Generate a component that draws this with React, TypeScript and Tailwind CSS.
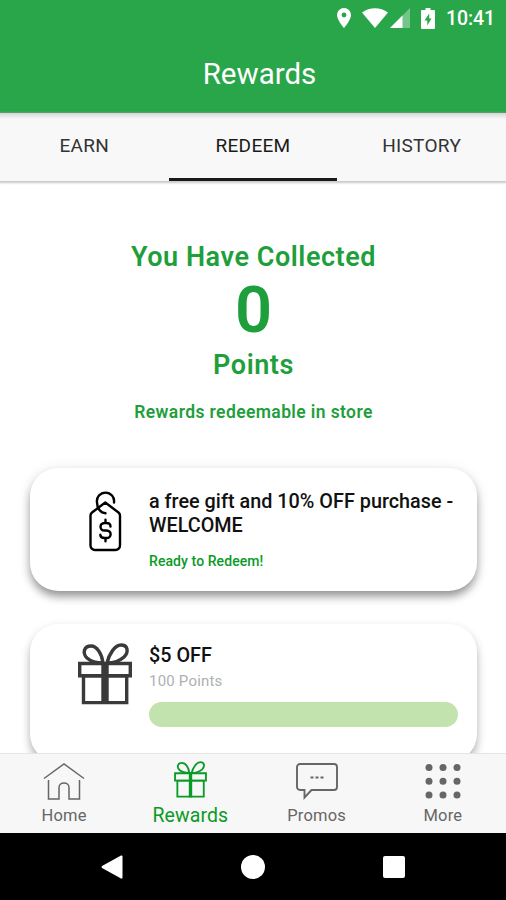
import type { ReactNode } from "react";

type Tab = { label: string; active?: boolean };

const TABS: Tab[] = [
  { label: "EARN" },
  { label: "REDEEM", active: true },
  { label: "HISTORY" },
];

function StatusBar() {
  return (
    <div className="flex h-9 items-center justify-end bg-[#29a649] pr-[11px] text-white">
      <svg width="14" height="20" viewBox="0 0 14 20" className="mr-[11px]">
        <path
          fill="currentColor"
          fillRule="evenodd"
          d="M7 0a7 7 0 0 0-7 7c0 5 7 13 7 13s7-8 7-13a7 7 0 0 0-7-7zm0 4.600a2.400 2.400 0 1 1 0 4.800 2.400 2.400 0 0 1 0-4.800z"
        />
      </svg>
      <svg width="26" height="20" viewBox="0 0 26 20" className="mr-[2px]">
        <path fill="currentColor" d="M0 4.500C7.500-1.200 18.500-1.200 26 4.500L13 20z" />
      </svg>
      <svg width="20" height="20" viewBox="0 0 20 20" className="mr-[11px]">
        <path fill="currentColor" opacity="0.35" d="M20 0v20H0z" />
        <path fill="currentColor" d="M12.500 7.500V20H0z" />
      </svg>
      <svg width="14" height="21" viewBox="0 0 14 21" className="mr-[11px]">
        <path
          fill="currentColor"
          d="M4.500 0h5v2H13a1 1 0 0 1 1 1v17a1 1 0 0 1-1 1H1a1 1 0 0 1-1-1V3a1 1 0 0 1 1-1h3.500z"
        />
        <path fill="#29a649" d="M8.200 5.500L3.500 12.500H6.300V17.500L10.500 10.500H8.200z" />
      </svg>
      <span className="pt-[2px] text-[19.500px] leading-none font-medium tracking-[-0.100px]">10:41</span>
    </div>
  );
}

function GiftIcon({ className, stroke, band }: { className: string; stroke: number; band: number }) {
  return (
    <svg viewBox="0 0 54 62" preserveAspectRatio="none" className={className} fill="none" stroke="currentColor" strokeWidth={stroke}>
      <path d="M1.700 20.500h50.600v12.300H1.700z" />
      <path d="M5.500 32.800h43.200v26.800H5.500z" />
      <path strokeWidth={band} d="M27 19v42" />
      <path d="M25 20C24 11 19 3 13 3C6 3 4 10 9 15C13 18.500 19 20 25 20z" />
      <path d="M29 20C31 11 37 2 43 2C50 2 51 9 46 14C41 18.500 35 20 29 20z" />
    </svg>
  );
}

function PriceTagIcon() {
  return (
    <svg width="34" height="62" viewBox="0 0 34 62" className="text-black" fill="none" stroke="currentColor" strokeWidth="2.400" strokeLinecap="round" strokeLinejoin="round">
      <path d="M17.300 11.500L30.500 21.500Q32 22.700 32 24.500V54.500a4.500 4.500 0 0 1-4.500 4.500H7A4.500 4.500 0 0 1 2.500 54.500V24.500Q2.500 22.700 4 21.500z" />
      <path d="M26 11.500A8.600 8.600 0 1 0 9 11.500C9.200 17.500 12.500 22.200 17.500 22.200" />
      <path d="M22.500 35.500C22.500 33 20.500 32 18.500 32H16.500C11.200 32 11.200 39.500 16.500 39.500H18.500C24 39.500 24 47 18.500 47H16.500C14 47 12.500 46 12.300 43.800M17.500 28.700v3M17.500 47.300v3" />
    </svg>
  );
}

function HomeIcon() {
  return (
    <svg width="42" height="38" viewBox="0 0 42 38" fill="none" stroke="currentColor" strokeWidth="1.500">
      <path d="M1 16.500L21 2L41 16.500" />
      <path d="M5.500 18V37H16V25.500C16 19.500 26 19.500 26 25.500V37H36.500V18" />
    </svg>
  );
}

function ChatIcon() {
  return (
    <svg width="42" height="38" viewBox="0 0 42 38" fill="none" stroke="currentColor" strokeWidth="1.900">
      <path d="M4 2H38a3 3 0 0 1 3 3V25a3 3 0 0 1-3 3H15.500L8.500 35.500V28H4a3 3 0 0 1-3-3V5a3 3 0 0 1 3-3z" />
      <path strokeWidth="2.200" d="M14.500 15.500h3M19.500 15.500h3M24.500 15.500h3" />
    </svg>
  );
}

function MoreIcon() {
  return (
    <svg width="36" height="38" viewBox="0 0 36 38" fill="currentColor">
      {[5.5, 19.2, 33].map((y) =>
        [4, 18, 32].map((x) => <circle key={`${x}-${y}`} cx={x} cy={y} r="3.500" />)
      )}
    </svg>
  );
}

function NavItem({ icon, label, active }: { icon: ReactNode; label: string; active?: boolean }) {
  return (
    <div className={`flex flex-1 flex-col items-center ${active ? "text-[#0a9a26]" : "text-[#666]"}`}>
      <div className="flex h-[47px] items-end pb-px">{icon}</div>
      <span
        className={
          active
            ? "mt-[5px] text-[19.500px] leading-[20px] tracking-[0.100px]"
            : "mt-[6px] text-[16.500px] leading-[18px] tracking-[0.200px]"
        }
      >
        {label}
      </span>
    </div>
  );
}

function Card({ icon, children, className }: { icon: ReactNode; children: ReactNode; className: string }) {
  return (
    <div className={`flex shrink-0 rounded-[28px] bg-white ${className}`}>
      <div className="flex w-[119px] shrink-0 justify-center pl-[30px]">{icon}</div>
      <div className="flex-1">{children}</div>
    </div>
  );
}

export default function App() {
  return (
    <div className="flex h-[900px] w-full flex-col overflow-hidden bg-white font-['Roboto',sans-serif]">
      <StatusBar />
      <header className="flex h-[77px] items-center justify-center border-b border-[#1c9238] bg-[#29a649] pt-px pl-[13px] text-[29.500px] text-white">
        Rewards
      </header>

      <div className="z-10 flex h-[68px] shrink-0 bg-[#f8f8f8] bg-linear-to-b from-[#d6d6d6] to-[#f8f8f8] to-[6px] shadow-[0_1px_2px_1px_#c8c8c8]">
        {TABS.map((tab) => (
          <div
            key={tab.label}
            className={`flex flex-1 justify-center pt-[21px] text-[19px] leading-[24px] tracking-[0.300px] ${
              tab.active ? "border-b-3 border-[#1a1a1a] text-[#1a1a1a]" : "text-[#333]"
            }`}
          >
            {tab.label}
          </div>
        ))}
      </div>

      <main className="flex min-h-0 flex-1 flex-col overflow-hidden pr-[29px] pl-[30px]">
        <div className="flex flex-col items-center pt-[60px] font-semibold text-[#1f9f3c]">
          <p className="text-[27px] leading-[32px] tracking-[0.550px]">You Have Collected</p>
          <p className="mt-[2px] text-[65px] leading-[70px]">0</p>
          <p className="mt-[4px] text-[27px] leading-[32px] tracking-[0.550px]">Points</p>
          <p className="mt-[20px] text-[17.500px] leading-[22px] tracking-[0.390px]">Rewards redeemable in store</p>
        </div>

        <Card
          className="mt-[45px] h-[123px] shadow-[0_6px_10px_-1px_rgba(0,0,0,0.4),0_2px_14px_rgba(0,0,0,0.1)]"
          icon={<div className="pt-[23px]"><PriceTagIcon /></div>}
        >
          <h2 className="pt-[22px] text-[19.800px] leading-[24px] font-medium tracking-[0.020px] text-[#111]">
            a free gift and 10% OFF purchase - WELCOME
          </h2>
          <p className="mt-[14px] text-[14px] leading-[18px] font-medium tracking-[0.080px] text-[#0a9a26]">Ready to Redeem!</p>
        </Card>

        <Card
          className="mt-[33px] h-[138px] shadow-[0_6px_10px_-1px_rgba(0,0,0,0.3),0_3px_12px_rgba(0,0,0,0.07)]"
          icon={
            <div className="pt-[19px]">
              <GiftIcon className="h-[62px] w-[54px] text-[#3a3a3a]" stroke={3.4} band={7.4} />
            </div>
          }
        >
          <h2 className="pt-[20px] text-[19.800px] leading-[24px] font-medium text-[#111]">$5 OFF</h2>
          <p className="mt-[3px] text-[15px] leading-[20px] tracking-[0.200px] text-[#b0b0b0]">100 Points</p>
          <div className="mt-[11px] mr-[19px] h-[25px] rounded-full bg-[#c2e2ae]" />
        </Card>
      </main>

      <nav className="z-10 flex h-[80px] shrink-0 border-t border-[#e4e4e4] bg-[#f7f7f7] pl-px">
        <NavItem icon={<HomeIcon />} label="Home" />
        <NavItem active icon={<GiftIcon className="mb-[2px] h-[37px] w-[33px]" stroke={3} band={5.5} />} label="Rewards" />
        <NavItem icon={<ChatIcon />} label="Promos" />
        <NavItem icon={<MoreIcon />} label="More" />
      </nav>

      <div className="flex h-[67px] shrink-0 items-center justify-center gap-[118px] bg-black text-white">
        <svg width="22" height="24" viewBox="0 0 22 24" fill="currentColor">
          <path d="M20 .500Q21.500 0 21.500 1.500V22.500Q21.500 24 20 23.500L1 13Q0 12 1 11z" />
        </svg>
        <div className="h-6 w-6 rounded-full bg-white" />
        <div className="h-[22px] w-[22px] rounded-[2px] bg-white" />
      </div>
    </div>
  );
}
